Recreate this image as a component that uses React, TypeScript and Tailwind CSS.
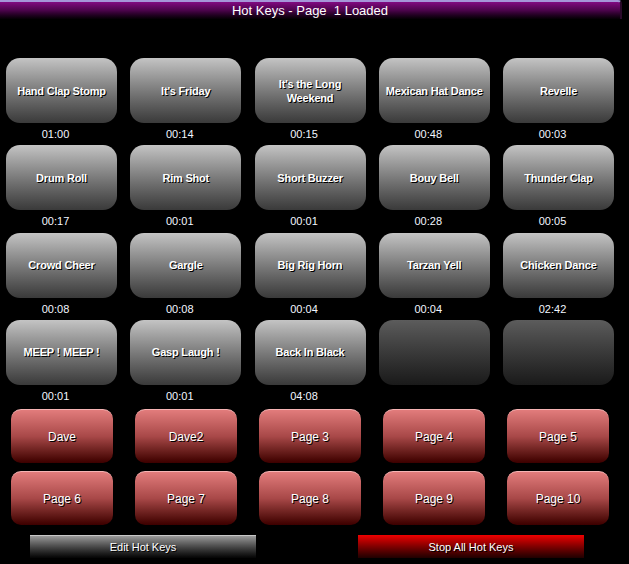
import React from "react";

type HotKey = { name: string; time?: string };

const hotKeys: HotKey[] = [
  { name: "Hand Clap Stomp", time: "01:00" },
  { name: "It's Friday", time: "00:14" },
  { name: "It's the Long Weekend", time: "00:15" },
  { name: "Mexican Hat Dance", time: "00:48" },
  { name: "Revelle", time: "00:03" },
  { name: "Drum Roll", time: "00:17" },
  { name: "Rim Shot", time: "00:01" },
  { name: "Short Buzzer", time: "00:01" },
  { name: "Bouy Bell", time: "00:28" },
  { name: "Thunder Clap", time: "00:05" },
  { name: "Crowd Cheer", time: "00:08" },
  { name: "Gargle", time: "00:08" },
  { name: "Big Rig Horn", time: "00:04" },
  { name: "Tarzan Yell", time: "00:04" },
  { name: "Chicken Dance", time: "02:42" },
  { name: "MEEP ! MEEP !", time: "00:01" },
  { name: "Gasp Laugh !", time: "00:01" },
  { name: "Back In Black", time: "04:08" },
  { name: "" },
  { name: "" },
];

const pages = [
  "Dave",
  "Dave2",
  "Page 3",
  "Page 4",
  "Page 5",
  "Page 6",
  "Page 7",
  "Page 8",
  "Page 9",
  "Page 10",
];

const font = "font-['Liberation_Sans',Arial,sans-serif]";
const shadow = "[text-shadow:1px_1px_0_#000]";

function KeyCell({ k }: { k: HotKey }) {
  const filled = k.name !== "";
  return (
    <div className="flex flex-col">
      <div
        className={
          "flex h-[65px] w-[111px] items-center justify-center rounded-[14px] px-[4px] text-center text-[11px] font-bold leading-[14px] tracking-[-0.2px] text-white " +
          shadow +
          (filled
            ? " bg-gradient-to-b from-[#c4c4c4] to-[#3a3a3a]"
            : " bg-gradient-to-b from-[#5c5c5c] to-[#1a1a1a]")
        }
      >
        {k.name}
      </div>
      <div className="flex h-[22.34px] items-center justify-center pr-[12px] text-[11px] text-[#f2f6ff]">
        {k.time ?? ""}
      </div>
    </div>
  );
}

export default function App() {
  return (
    <div className={"h-[564px] w-[629px] overflow-hidden bg-black " + font}>
      {/* title bar */}
      <div className="w-[622px] rounded-tr-[4px] border-t-2 border-r-2 border-t-[#a595d8] border-r-[#2a0a2a] bg-gradient-to-b from-[#820a82] via-[#4a044a] to-[#050005]">
        <div className="flex h-[17px] items-center justify-center whitespace-pre text-[13px] leading-none text-white">
          Hot Keys - Page  1 Loaded
        </div>
      </div>

      {/* hot key grid */}
      <div className="mt-[39px] grid grid-cols-[repeat(5,111px)] gap-x-[13.25px] pl-[6px]">
        {hotKeys.map((k, i) => (
          <KeyCell key={i} k={k} />
        ))}
      </div>

      {/* page buttons */}
      <div className="mt-[2px] grid grid-cols-[repeat(5,102px)] gap-x-[22px] gap-y-[8px] pl-[11px]">
        {pages.map((p) => (
          <div
            key={p}
            className={
              "flex h-[54px] items-center justify-center rounded-[10px] border-t border-t-[#f6b4b4] bg-gradient-to-b from-[#e27c7c] via-[#a84848] to-[#3c0000] text-[12px] text-white " +
              shadow
            }
          >
            {p}
          </div>
        ))}
      </div>

      {/* bottom controls */}
      <div className="mt-[10px] flex">
        <div
          className={
            "ml-[30px] flex h-[23px] w-[226px] items-center justify-center border-t border-t-[#c8c8c8] bg-gradient-to-b from-[#9a9a9a] to-[#050505] text-[11px] text-white " +
            shadow
          }
        >
          Edit Hot Keys
        </div>
        <div
          className={
            "ml-[102px] flex h-[23px] w-[226px] items-center justify-center bg-gradient-to-b from-[#f00000] to-[#200000] text-[11px] text-white " +
            shadow
          }
        >
          Stop All Hot Keys
        </div>
      </div>
    </div>
  );
}
